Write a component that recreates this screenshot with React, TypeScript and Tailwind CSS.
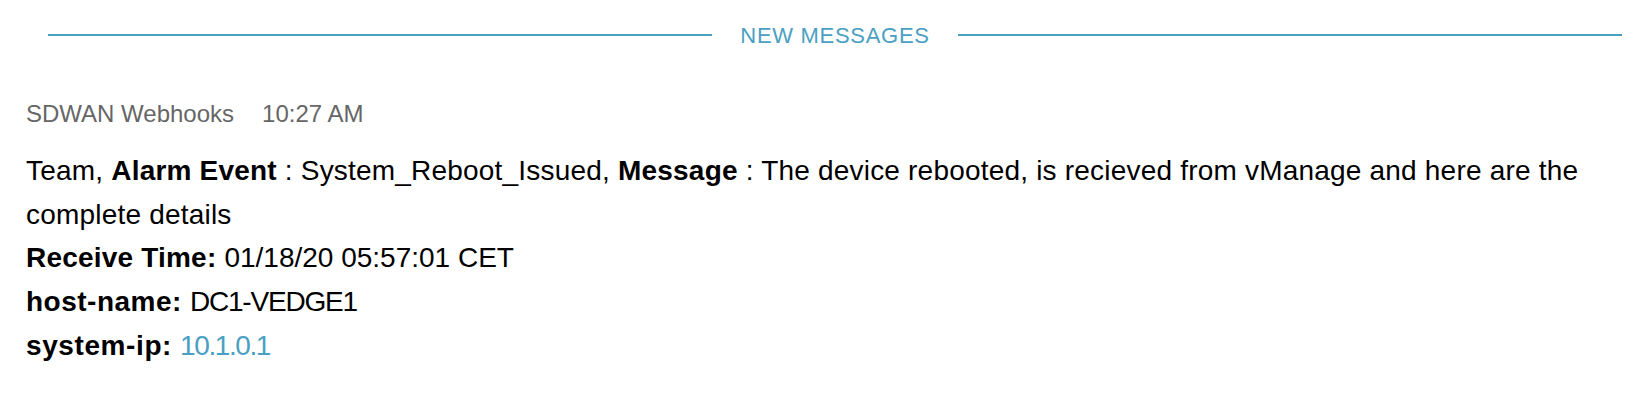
export default function App() {
  return (
    <div className="w-[1640px] h-[400px] bg-white font-['Liberation_Sans',Arial,sans-serif] overflow-hidden">
      {/* New messages divider */}
      <div className="flex items-center gap-[28px] pl-[48px] pr-[18px] pt-[22px]">
        <div className="h-[2px] flex-1 bg-[#4aa0c2]" />
        <span className="text-[22px] leading-[26px] tracking-[0.7px] text-[#4aa0c2] translate-y-[1px]">NEW MESSAGES</span>
        <div className="h-[2px] flex-1 bg-[#4aa0c2]" />
      </div>

      {/* Message */}
      <div className="pl-[26px] pr-[40px]">
        <div className="mt-[50px] flex gap-[28px] text-[24px] leading-[32px] text-[#666666]">
          <span>SDWAN Webhooks</span>
          <span>10:27 AM</span>
        </div>
        <div className="mt-[19px] text-[28px] leading-[43.7px] tracking-[0.2px] text-black">
          <p>
            Team, <b>Alarm Event</b> : System_Reboot_Issued, <b>Message</b> : The device rebooted, is recieved from
            vManage and here are the complete details
          </p>
          <p>
            <b>Receive Time:</b> <span className="tracking-[0px]">01/18/20 05:57:01 CET</span>
          </p>
          <p>
            <b className="tracking-[0.5px]">host-name:</b> <span className="tracking-[-1.2px]">DC1-VEDGE1</span>
          </p>
          <p>
            <b className="tracking-[0.6px]">system-ip:</b>{" "}
            <span className="tracking-[-1.4px] text-[#4aa0c2]">10.1.0.1</span>
          </p>
        </div>
      </div>
    </div>
  )
}
